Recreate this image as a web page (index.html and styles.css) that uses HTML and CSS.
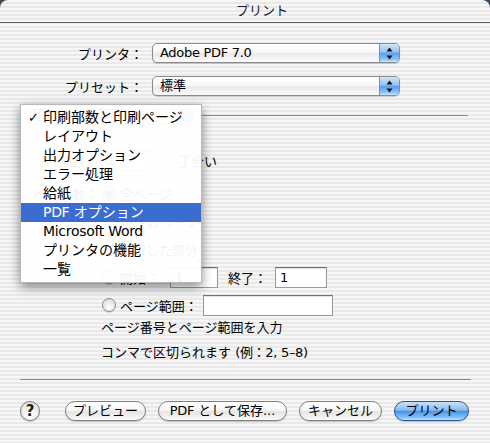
FILE: index.html
```html
<!DOCTYPE html>
<html lang="ja">
<head>
<meta charset="utf-8">
<title>プリント</title>
<link rel="stylesheet" href="styles.css">
</head>
<body>
<div class="window">
  <div class="titlebar">プリント</div>

  <div class="form">
    <span class="lbl">プリンタ：</span>
    <div class="popup"><span class="val lat">Adobe PDF 7.0</span><span class="step"><svg width="7" height="13" viewBox="0 0 7 13"><path d="M3.5 0.5L6.5 4.5H0.5Z M0.5 8.5H6.5L3.5 12.5Z" fill="#111"/></svg></span></div>
    <span class="lbl">プリセット：</span>
    <div class="popup"><span class="val">標準</span><span class="step"><svg width="7" height="13" viewBox="0 0 7 13"><path d="M3.5 0.5L6.5 4.5H0.5Z M0.5 8.5H6.5L3.5 12.5Z" fill="#111"/></svg></span></div>
  </div>

  <div class="panelbar">
    <div class="popup panel"><span class="val">印刷部数と印刷ページ</span><span class="step"><svg width="7" height="13" viewBox="0 0 7 13"><path d="M3.5 0.5L6.5 4.5H0.5Z M0.5 8.5H6.5L3.5 12.5Z" fill="#111"/></svg></span></div>
    <div class="rule"></div>
  </div>

  <div class="opts">
    <div class="row">
      <span class="olbl">部数：</span>
      <span class="field copies">1</span>
      <span class="check"></span><span>丁合い</span>
    </div>
    <div class="row gap">
      <span class="olbl">ページ数：</span>
      <span class="radio on"></span><span>全ページ</span>
    </div>
    <div class="row sub"><span class="radio"></span><span>現在のページ</span></div>
    <div class="row sub"><span class="radio"></span><span>選択した部分</span></div>
    <div class="row sub">
      <span class="radio"></span><span>開始：</span>
      <span class="field from">1</span>
      <span class="to">終了：</span>
      <span class="field till">1</span>
    </div>
    <div class="row sub">
      <span class="radio"></span><span>ページ範囲：</span>
      <span class="field range"></span>
    </div>
    <p class="help">ページ番号とページ範囲を入力</p>
    <p class="help second">コンマで区切られます <span class="lat">(例：2, 5–8)</span></p>
  </div>

  <div class="sep"></div>

  <div class="buttons">
    <span class="helpbtn">?</span>
    <span class="btn preview">プレビュー</span>
    <span class="btn pdf"><span class="lat">PDF</span> として保存...</span>
    <span class="btn cancel">キャンセル</span>
    <span class="btn default print">プリント</span>
  </div>

  <div class="menu">
    <div class="mi"><span class="chk">✓</span>印刷部数と印刷ページ</div>
    <div class="mi">レイアウト</div>
    <div class="mi">出力オプション</div>
    <div class="mi">エラー処理</div>
    <div class="mi">給紙</div>
    <div class="mi on"><span class="lat">PDF</span> オプション</div>
    <div class="mi"><span class="lat">Microsoft Word</span></div>
    <div class="mi">プリンタの機能</div>
    <div class="mi">一覧</div>
  </div>
</div>
</body>
</html>
```

FILE: styles.css
```css
* { box-sizing: border-box; }
html, body { margin: 0; padding: 0; }
body {
  width: 490px;
  height: 443px;
  overflow: hidden;
  background: #3f4854;
  font-family: "DejaVu Sans", "Noto Sans CJK JP", sans-serif;
  font-size: 13px;
  color: #000;
}
.lat { letter-spacing: -0.3px; }

.window {
  position: relative;
  width: 490px;
  height: 443px;
  border-radius: 8px 8px 0 0;
  overflow: hidden;
  background: repeating-linear-gradient(to bottom, #f6f6f6 0, #f6f6f6 2px, #e9e9e9 2px, #e9e9e9 4px);
}

.titlebar {
  height: 23px;
  border-bottom: 1px solid #5c5c5c;
  text-align: center;
  padding-left: 34px;
  line-height: 22px;
  font-size: 13px;
  color: #1a1a1a;
}

/* printer / preset */
.form {
  display: grid;
  grid-template-columns: 143px 248px;
  column-gap: 9px;
  row-gap: 13px;
  align-items: center;
  margin-top: 20px;
}
.lbl { text-align: right; white-space: nowrap; }

.popup {
  height: 20px;
  display: flex;
  align-items: stretch;
  border: 1px solid #8b8b8b;
  border-radius: 5px;
  overflow: hidden;
  background: linear-gradient(#ffffff, #f7f7f7 45%, #e9e9e9 55%, #fbfbfb);
  box-shadow: 0 1px 1px rgba(0,0,0,0.18);
}
.popup .val {
  flex: 1;
  padding-left: 7px;
  line-height: 18px;
  white-space: nowrap;
}
.step {
  width: 20px;
  flex: none;
  display: flex;
  align-items: center;
  justify-content: center;
  border-left: 1px solid #6e90c9;
  background: linear-gradient(#cfe6fc, #93c2f1 45%, #5f9fe8 52%, #86c3f8 85%, #c9ecff);
}

/* panel selector */
.panelbar {
  display: flex;
  align-items: center;
  height: 20px;
  margin-top: 9px;
  padding-left: 24px;
}
.panel { width: 169px; }
.rule {
  flex: 1;
  height: 1px;
  background: #8c8c8c;
  margin-left: 9px;
  margin-right: 22px;
}

/* options */
.opts { margin-top: 21px; }
.row {
  display: flex;
  align-items: center;
  height: 28px;
  white-space: nowrap;
}
.row.gap { margin-top: 5px; }
.row.sub { padding-left: 102px; }
.olbl {
  width: 98px;
  margin-right: 4px;
  text-align: right;
}
.field {
  height: 21px;
  line-height: 19px;
  padding-left: 4px;
  background: #fff;
  border: 1px solid #9a9a9a;
  border-top-color: #6f6f6f;
  box-shadow: inset 0 1px 1px rgba(0,0,0,0.12);
}
.copies { width: 48px; margin-right: 11px; }
.from { width: 48px; margin-left: 11px; }
.to { margin-left: 10px; }
.till { width: 52px; margin-left: 8px; }
.range { width: 130px; margin-left: 5px; }

.check {
  width: 13px;
  height: 13px;
  margin-right: 4px;
  border: 1px solid #8a8a8a;
  border-radius: 2px;
  background: linear-gradient(#ffffff, #e4e4e4);
}
.radio {
  width: 14px;
  height: 14px;
  margin-right: 4px;
  border: 1px solid #8a8a8a;
  border-radius: 50%;
  background: radial-gradient(circle at 50% 70%, #ffffff, #e2e2e2 70%, #cfcfcf);
  box-shadow: 0 1px 1px rgba(0,0,0,0.12);
}
.radio.on {
  border-color: #41639f;
  background: radial-gradient(circle, #1d2c48 0 2.5px, transparent 3px), linear-gradient(#bcdcfb, #6aa6ec 50%, #8dc8fa);
}

.help {
  margin: 0;
  padding-left: 101px;
  line-height: 18px;
  white-space: nowrap;
}
.help.second { margin-top: 7px; }

.sep {
  width: 451px;
  height: 1px;
  margin: 17px 0 0 20px;
  background: #8a8a8a;
}

/* buttons */
.buttons {
  display: flex;
  align-items: center;
  height: 20px;
  margin-top: 21px;
  padding-left: 20px;
}
.helpbtn {
  width: 20px;
  height: 20px;
  margin-right: 25px;
  border: 1px solid #7c7c7c;
  border-radius: 50%;
  text-align: center;
  line-height: 18px;
  font-weight: bold;
  font-size: 15px;
  color: #222;
  background: radial-gradient(circle at 50% 80%, #ffffff, #ececec 60%, #d8d8d8);
  box-shadow: 0 1px 1px rgba(0,0,0,0.2);
}
.btn {
  height: 20px;
  margin-right: 12px;
  border: 1px solid #7f7f7f;
  border-radius: 10px;
  text-align: center;
  line-height: 18px;
  white-space: nowrap;
  background: linear-gradient(#ffffff, #f6f6f6 45%, #e4e4e4 55%, #fbfbfb);
  box-shadow: 0 1px 1px rgba(0,0,0,0.2);
}
.preview { width: 81px; }
.pdf { width: 129px; }
.cancel { width: 83px; margin-right: 12px; }
.print { width: 75px; margin-right: 0; }
.btn.default {
  border-color: #2f5195;
  background: linear-gradient(#c6e2fc, #86bbf0 45%, #4d92e6 52%, #7fc0f8 85%, #c2e9ff);
}

/* open popup menu */
.menu {
  position: absolute;
  left: 20px;
  top: 104px;
  width: 182px;
  padding: 3px 0;
  border: 1px solid #b9b9b9;
  background: rgba(255,255,255,0.95);
  box-shadow: 0 4px 10px rgba(0,0,0,0.45);
  font-size: 14px;
}
.mi {
  position: relative;
  height: 19px;
  line-height: 19px;
  padding-left: 22px;
  white-space: nowrap;
}
.mi.on { background: #3a6dcf; color: #fff; }
.chk {
  position: absolute;
  left: 7px;
  top: 0;
  font-size: 13px;
}
```
